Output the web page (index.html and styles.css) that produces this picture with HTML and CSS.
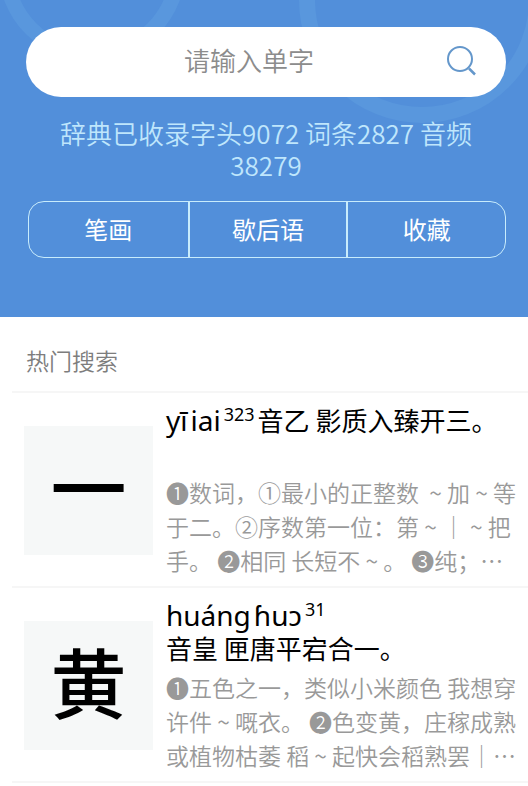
FILE: index.html
```html
<!DOCTYPE html>
<html lang="zh-CN">
<head>
    <meta charset="UTF-8">
    <meta name="viewport" content="width=device-width, initial-scale=1">
    <title>热门搜索</title>
    <link rel="stylesheet" href="styles.css">
</head>
<body>
    <header class="header">
        <svg class="rings" width="560" height="140" viewBox="0 0 560 140" aria-hidden="true">
            <circle cx="92" cy="-32" r="86" stroke-width="15"/>
            <circle cx="422" cy="0" r="115" stroke-width="16"/>
        </svg>

        <form class="search">
            <input type="text" class="search-input" placeholder="请输入单字" aria-label="请输入单字">
            <button type="submit" class="search-button" aria-label="搜索">
                <svg width="34" height="34" viewBox="0 0 34 34" fill="none" stroke="#6497cb" stroke-width="2">
                    <circle cx="14" cy="14" r="12"/>
                    <path d="M23 23.5l6 6" stroke-width="2.5"/>
                </svg>
            </button>
        </form>

        <p class="stats">辞典已收录字头9072 词条2827 音频<br>38279</p>

        <nav class="tabs">
            <a href="#bihua">笔画</a>
            <a href="#xiehouyu">歇后语</a>
            <a href="#shoucang">收藏</a>
        </nav>
    </header>

    <main>
        <h2 class="section-title">热门搜索</h2>

        <!-- Entries -->
        <article class="entry">
            <div class="tile">一</div>
            <div class="entry-body">
                <h3 class="entry-title"><span class="pinyin"><span>yī</span><span>iai</span><sup>323</sup></span><span class="sound">音乙 影质入臻开三。</span></h3>
                <p class="meaning">❶数词，①最小的正整数&nbsp; ~ 加 ~ 等<br>于二。②序数第一位：第 ~ ｜ ~ 把<br>手。 ❷相同 长短不 ~ 。 ❸纯；…</p>
            </div>
        </article>

        <article class="entry">
            <div class="tile">黄</div>
            <div class="entry-body">
                <h3 class="entry-title"><span class="pinyin"><span>huáng</span><span>ɦuɔ</span><sup>31</sup></span><br><span class="sound">音皇 匣唐平宕合一。</span></h3>
                <p class="meaning">❶五色之一，类似小米颜色 我想穿<br>许件 ~ 嘅衣。 ❷色变黄，庄稼成熟<br>或植物枯萎 稻 ~ 起快会稻熟罢｜…</p>
            </div>
        </article>
    </main>
</body>
</html>
```

FILE: styles.css
```css
* {
    box-sizing: border-box;
}
body {
    margin: 0;
    font-family: "Noto Sans CJK SC", sans-serif;
    background-color: #fff;
    color: #000;
}
h2, h3, p {
    margin: 0;
    font-weight: 400;
}

/* Header */
.header {
    position: relative;
    overflow: hidden;
    padding: 27px 22px 59px 26px;
    background-color: #528fda;
}
.rings {
    position: absolute;
    top: 0;
    left: 0;
    fill: none;
    stroke: #5997dd;
}
.search {
    position: relative;
    display: flex;
    align-items: center;
    height: 70px;
    padding: 0 26px;
    border-radius: 35px;
    background-color: #fff;
}
.search-input {
    flex: 1;
    min-width: 0;
    padding: 0 0 6px;
    border: none;
    outline: none;
    background: none;
    font-family: inherit;
    font-size: 26px;
    font-weight: 350;
    text-align: center;
}
.search-input::placeholder {
    color: #8c8c8c;
}
.search-button {
    display: flex;
    padding: 0;
    border: none;
    background: none;
    cursor: pointer;
}
.stats {
    position: relative;
    margin-top: 20px;
    color: #bfe6fc;
    font-size: 26px;
    font-weight: 350;
    line-height: 32px;
    text-align: center;
}
.tabs {
    display: grid;
    grid-template-columns: repeat(3, 1fr);
    margin-top: 20px;
    margin-left: 2px;
    border: 1px solid #c8ecfc;
    border-radius: 16px;
}
.tabs a {
    padding-bottom: 2px;
    color: #fff;
    font-size: 24px;
    line-height: 53px;
    text-align: center;
    text-decoration: none;
}
.tabs a + a {
    border-left: 2px solid #c8ecfc;
}

/* Entry list */
.section-title {
    margin-left: 12px;
    padding: 26px 14px 14px;
    border-bottom: 2px solid #f6f6f6;
    color: #7d7d7d;
    font-size: 23px;
    font-weight: 350;
    line-height: 34px;
}
.entry {
    display: flex;
    gap: 13px;
    margin-left: 12px;
    padding: 10px 12px 9px;
    border-bottom: 2px solid #f6f6f6;
}
.tile {
    flex: none;
    width: 129px;
    height: 129px;
    margin-top: 23px;
    background-color: #f6f8f8;
    font-size: 76px;
    font-weight: 500;
    line-height: 118px;
    text-align: center;
}
.entry-body {
    flex: 1;
    min-width: 0;
    white-space: nowrap;
}
.entry-title {
    min-height: 66px;
    font-size: 26px;
    line-height: 33px;
}
.pinyin {
    display: inline-flex;
    gap: 3px;
    height: 32px;
    font-family: "Noto Sans", sans-serif;
    font-size: 28px;
}
.pinyin sup {
    font-size: 18px;
    line-height: 20px;
}
.sound {
    margin-left: 3px;
}
br + .sound {
    margin-left: 0;
}
.meaning {
    margin-top: 6px;
    color: #999;
    font-size: 23px;
    font-weight: 350;
    line-height: 34px;
}
```
